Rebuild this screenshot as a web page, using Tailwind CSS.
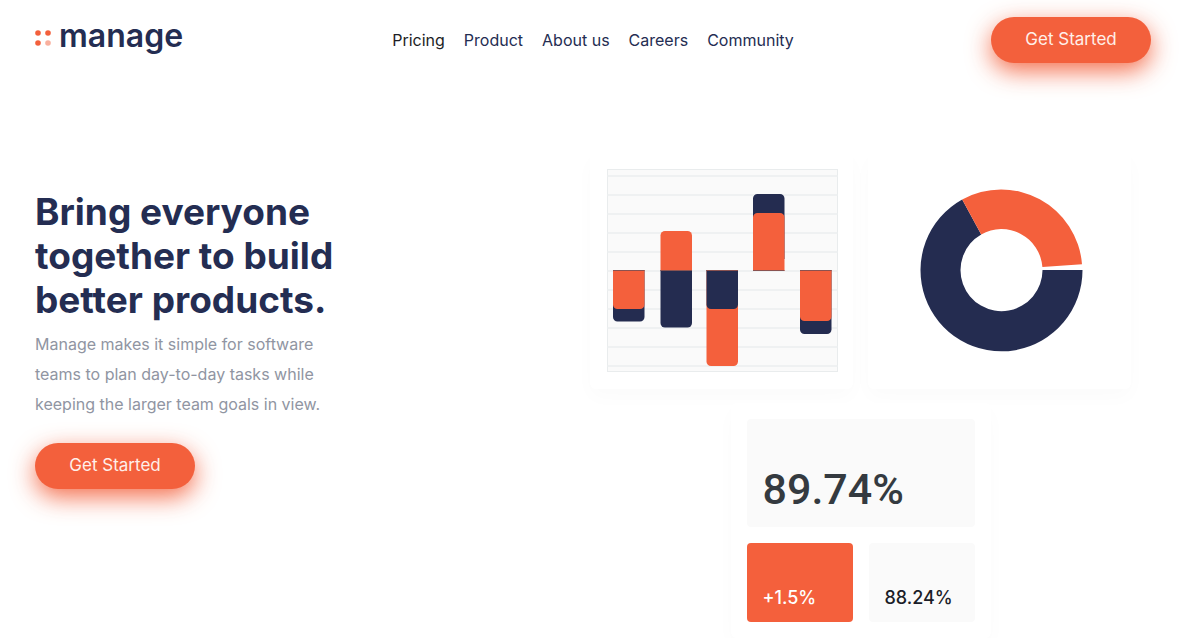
<!DOCTYPE html>
<html lang="en">
<head>
<meta charset="utf-8">
<meta name="viewport" content="width=device-width, initial-scale=1">
<title>Manage</title>
<script src="https://cdn.jsdelivr.net/npm/@tailwindcss/browser@4"></script>
</head>
<body class="bg-white font-['Inter','Liberation_Sans',sans-serif] text-[#242d52] overflow-x-hidden">
<header class="grid grid-cols-[1fr_auto_1fr] items-center pt-[17px] pl-[35px] pr-10">
  <a href="#" aria-label="manage" class="flex items-center gap-2 justify-self-start pb-1">
    <svg class="w-4 h-4" viewBox="0 0 16 16" aria-hidden="true">
      <circle cx="3" cy="3" r="2.8" fill="#f3603c"/><circle cx="13" cy="3" r="2.8" fill="#f3603c"/>
      <circle cx="3" cy="13" r="2.8" fill="#f3603c"/><circle cx="13" cy="13" r="2.8" fill="#f9b09e"/>
    </svg>
    <span class="text-[32px] leading-9 font-semibold pb-1">manage</span>
  </a>
  <nav class="flex gap-[19px] text-base">
    <a href="#" class="text-[#1d1e25]">Pricing</a>
    <a href="#">Product</a>
    <a href="#">About us</a>
    <a href="#">Careers</a>
    <a href="#">Community</a>
  </nav>
  <button type="button" class="justify-self-end w-40 h-[46px] rounded-full bg-[#f3603c] text-[17px] text-[#ffefe9] shadow-[0_8px_24px_rgba(243,96,60,0.9)]">Get Started</button>
</header>
<main class="flex justify-between items-start pl-[35px] pr-[60px] pt-[89px]">
  <section class="pt-[38px] w-[320px]">
    <h1 class="text-[37px] leading-[44px] font-bold">Bring everyone together to build better products.</h1>
    <p class="mt-[7px] text-base leading-[30px] text-[#9095a2]">Manage makes it simple for software teams to plan day-to-day tasks while keeping the larger team goals in view.</p>
    <button type="button" class="mt-6 w-40 h-[46px] rounded-full bg-[#f3603c] text-[17px] text-[#ffefe9] shadow-[0_8px_24px_rgba(243,96,60,0.9)]">Get Started</button>
  </section>
  <section aria-label="Team statistics" class="flex flex-wrap justify-center gap-x-[15px] gap-y-[14px] w-[541px]">
    <div class="w-[263px] rounded-md bg-white p-[17px] shadow-[0_8px_20px_rgba(0,0,0,0.02)]">
      <svg class="w-[231px] h-[203px] block" viewBox="0 0 231 203" role="img" aria-label="Bar chart">
        <rect x=".5" y=".5" width="230" height="202" fill="#fafafa" stroke="#e9eced"/>
        <path d="M0 7h231M0 26h231M0 45h231M0 64h231M0 83h231M0 102h231M0 121h231M0 140h231M0 159h231M0 178h231M0 197h231" stroke="#eceeef" stroke-width="1.6"/>
        <path fill="#242c50" d="M6 101h31.500v47a4.500 4.500 0 0 1-4.500 4.500h-22.500a4.500 4.500 0 0 1-4.500-4.500z"/>
        <path fill="#f4603c" d="M6 101h31.500v34.500a4.500 4.500 0 0 1-4.500 4.500h-22.500a4.500 4.500 0 0 1-4.500-4.500z"/>
        <path fill="#f4603c" d="M53.500 101.500v-35a4.500 4.500 0 0 1 4.500-4.500h22.500a4.500 4.500 0 0 1 4.500 4.500v35z"/>
        <path fill="#242c50" d="M53.500 101h31.500v53a4.500 4.500 0 0 1-4.500 4.500h-22.500a4.500 4.500 0 0 1-4.500-4.500z"/>
        <path fill="#f4603c" d="M99.500 101h31.500v91.500a4.500 4.500 0 0 1-4.500 4.500h-22.500a4.500 4.500 0 0 1-4.500-4.500z"/>
        <path fill="#242c50" d="M99.500 101h31.500v34.500a4.500 4.500 0 0 1-4.500 4.500h-22.500a4.500 4.500 0 0 1-4.500-4.500z"/>
        <path fill="#242c50" d="M146 90v-60.500a4.500 4.500 0 0 1 4.500-4.500h22.500a4.500 4.500 0 0 1 4.500 4.500v60.500z"/>
        <path fill="#f4603c" d="M146 102v-53.500a4.500 4.500 0 0 1 4.500-4.500h22.500a4.500 4.500 0 0 1 4.500 4.500v53.500z"/>
        <path fill="#242c50" d="M193 101h31.500v59.500a4.500 4.500 0 0 1-4.500 4.500h-22.500a4.500 4.500 0 0 1-4.500-4.500z"/>
        <path fill="#f4603c" d="M193 101h31.500v46.500a4.500 4.500 0 0 1-4.500 4.500h-22.500a4.500 4.500 0 0 1-4.500-4.500z"/>
        <path d="M6 101.500h31.500M53.500 101.500h31.500M99.500 101.500h31.500M146 101.500h31.500M193 101.500h31.500" stroke="#8a5250"/>
      </svg>
    </div>
    <div class="w-[263px] rounded-md bg-white shadow-[0_8px_20px_rgba(0,0,0,0.02)]">
      <svg class="w-full h-[236px] block" viewBox="0 0 263 236" role="img" aria-label="Donut chart">
        <path fill="#242c50" d="M214.500 118A81 81 0 1 1 94.200 47.500L113.200 82.500A41 41 0 1 0 174.500 118z"/>
        <path fill="#f4603c" d="M94.200 47.500A81 81 0 0 1 214 112.300L174.400 115A41 41 0 0 0 113.200 82.500z"/>
      </svg>
    </div>
    <div class="w-[260px] rounded-md bg-white p-4 grid grid-cols-2 gap-4 shadow-[0_8px_20px_rgba(0,0,0,0.02)]">
      <div class="col-span-2 h-[108px] rounded bg-[#fafafa] flex items-end px-4 pb-4 font-['Roboto','Inter',sans-serif] text-[43px] leading-[44px] font-medium text-[#343a40]">89.74%</div>
      <div class="h-[79px] rounded bg-[#f4603c] flex items-end px-4 pb-3 text-[18px] leading-6 font-medium text-white">+1.5%</div>
      <div class="h-[79px] rounded bg-[#fafafa] flex items-end px-4 pb-3 text-[18px] leading-6 font-medium text-[#1b1d28]">88.24%</div>
    </div>
  </section>
</main>
</body>
</html>
